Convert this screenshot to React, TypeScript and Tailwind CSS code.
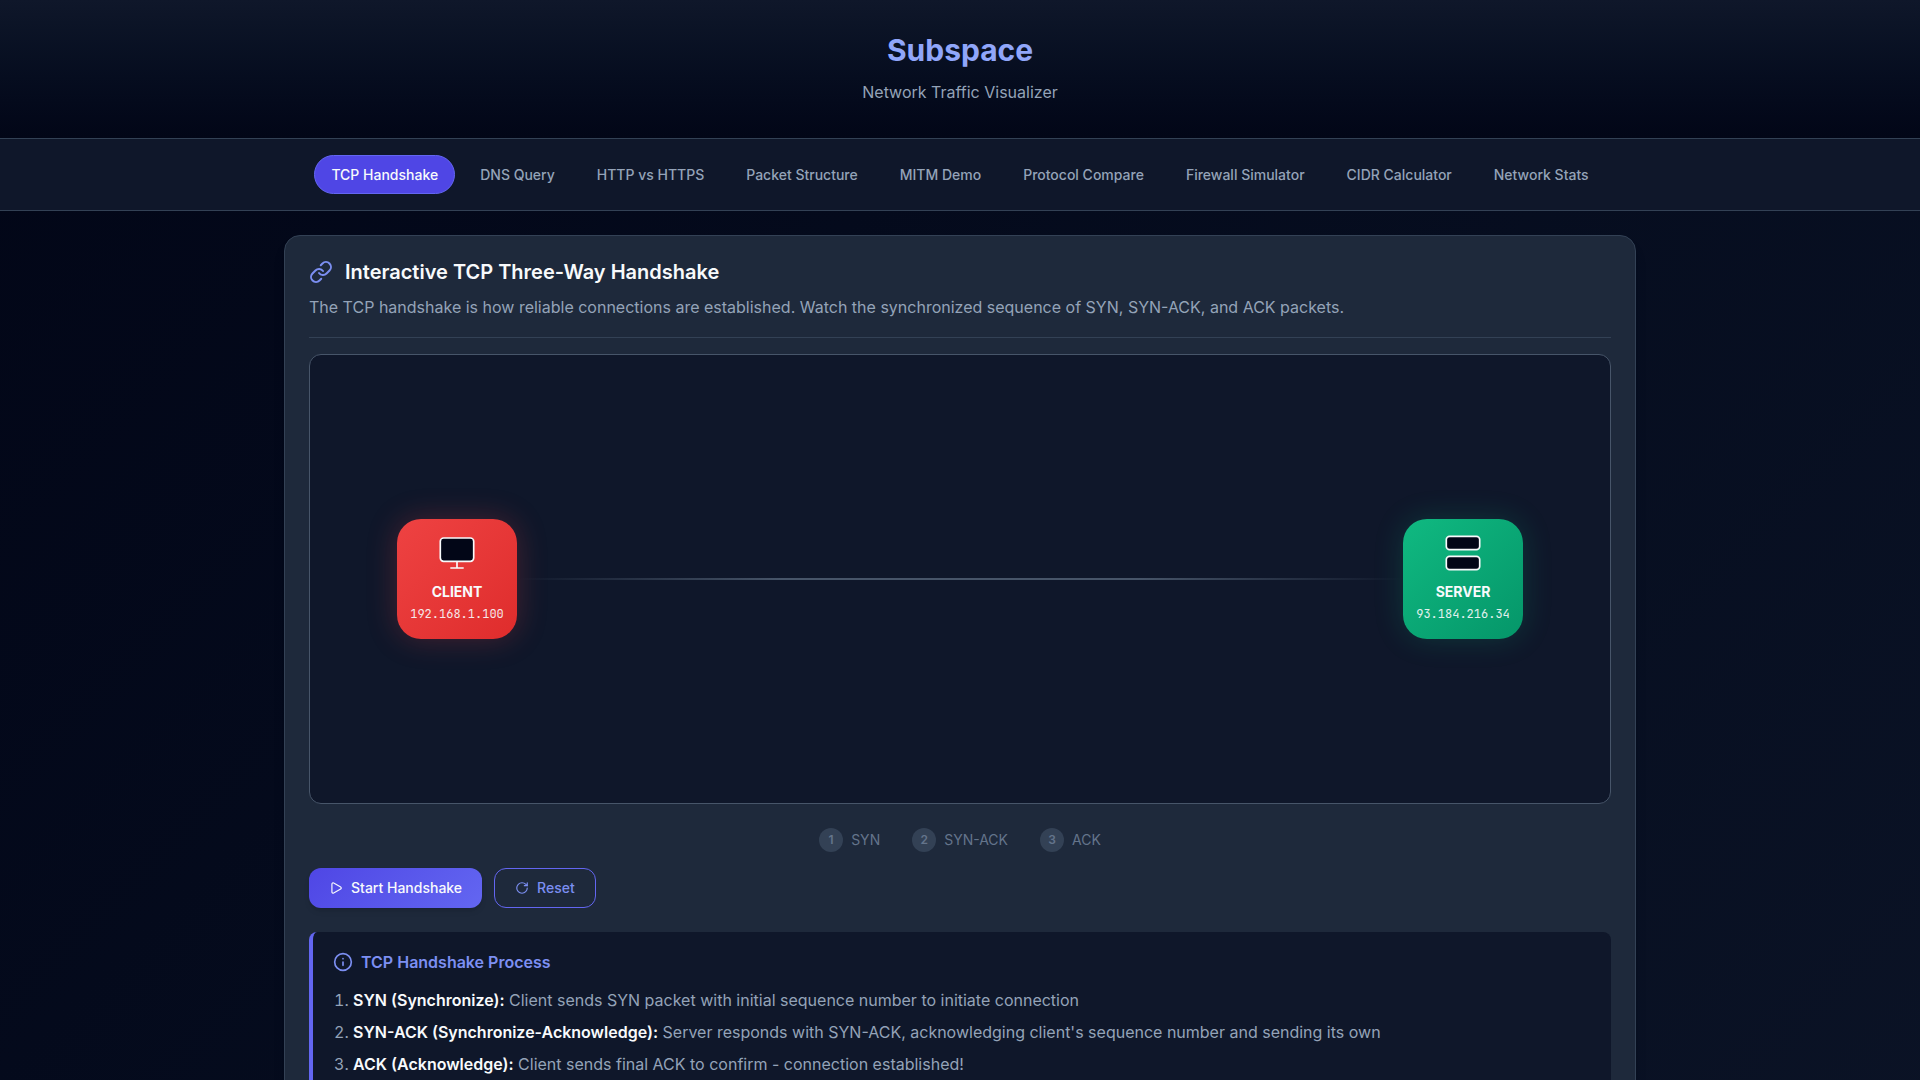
import { Info, Link, Play, RotateCw } from "lucide-react";
import { useState } from "react";

const tabs = [
  "TCP Handshake",
  "DNS Query",
  "HTTP vs HTTPS",
  "Packet Structure",
  "MITM Demo",
  "Protocol Compare",
  "Firewall Simulator",
  "CIDR Calculator",
  "Network Stats",
];

const steps = ["SYN", "SYN-ACK", "ACK"];

const processSteps = [
  {
    name: "SYN (Synchronize):",
    text: "Client sends SYN packet with initial sequence number to initiate connection",
  },
  {
    name: "SYN-ACK (Synchronize-Acknowledge):",
    text: "Server responds with SYN-ACK, acknowledging client's sequence number and sending its own",
  },
  {
    name: "ACK (Acknowledge):",
    text: "Client sends final ACK to confirm - connection established!",
  },
];

const ClientIcon = () => (
  <svg width="40" height="40" viewBox="0 0 40 40" fill="#020617" stroke="#f8fafc" strokeWidth="1.67">
    <rect x="3.3" y="5" width="33.4" height="23.3" rx="3.3" />
    <path d="M20 28.3V35M13.3 35h13.4" />
  </svg>
);

const ServerIcon = () => (
  <svg width="40" height="40" viewBox="0 0 40 40" fill="#020617" stroke="#f8fafc" strokeWidth="1.67">
    <rect x="3.3" y="3.3" width="33.4" height="13.4" rx="3.3" />
    <rect x="3.3" y="23.3" width="33.4" height="13.4" rx="3.3" />
  </svg>
);

const nodeClass =
  "flex size-[120px] shrink-0 flex-col items-center justify-center rounded-3xl";
const nodeLabelClass = "mt-2 text-sm leading-[21px] font-bold";
const nodeIpClass =
  "mt-0.5 font-['JetBrains_Mono','Liberation_Mono',monospace] text-xs leading-[21px] opacity-90";

const App = () => {
  const [activeTab, setActiveTab] = useState(tabs[0]);

  return (
    <div className="min-h-screen bg-linear-135 from-[#020617] to-[#0f172a] to-130% font-['Inter',sans-serif] text-base text-slate-50">
      <header className="border-b border-[#334155] bg-linear-to-b from-[#0f172a] to-[#020617] px-6 py-8 text-center">
        <h1 className="text-[30px] leading-9 font-bold text-[#90a6fa]">Subspace</h1>
        <p className="mt-2.5 leading-7 text-[#94a3b8]">Network Traffic Visualizer</p>
      </header>

      <nav className="flex flex-wrap justify-center gap-2 border-b border-[#334155] bg-[#0f172a] px-6 py-4">
        {tabs.map((tab) => (
          <button
            key={tab}
            onClick={() => setActiveTab(tab)}
            className={`rounded-full border px-4 py-2 text-sm leading-[21px] font-medium ${
              tab === activeTab
                ? "border-[#6366f1] bg-[#4f46e5] text-slate-50"
                : "border-transparent text-[#94a3b8]"
            }`}
          >
            {tab}
          </button>
        ))}
      </nav>

      <main className="mx-auto max-w-[1400px] p-6">
        <section className="rounded-2xl border border-[#334155] bg-[#1e293b] p-6 shadow-lg">
          <div className="mb-4 border-b border-[#334155] pb-4">
            <h2 className="mb-[9px] flex items-center gap-3 text-xl leading-6 font-semibold">
              <Link className="size-6 text-[#7c8ff2]" />
              Interactive TCP Three-Way Handshake
            </h2>
            <p className="leading-7 text-[#94a3b8]">
              The TCP handshake is how reliable connections are established. Watch the
              synchronized sequence of SYN, SYN-ACK, and ACK packets.
            </p>
          </div>

          <div className="flex h-[450px] items-center rounded-xl border border-[#475569] bg-[#0f172a] px-[87px]">
            <div className={`${nodeClass} bg-linear-135 from-[#ee4242] to-[#df2c2c] shadow-[0_0_30px_rgba(239,68,68,0.25)]`}>
              <ClientIcon />
              <span className={nodeLabelClass}>CLIENT</span>
              <span className={nodeIpClass}>192.168.1.100</span>
            </div>
            <div className="h-0.5 flex-1 bg-[linear-gradient(90deg,transparent,#475569_30%,#475569_70%,transparent)]" />
            <div className={`${nodeClass} bg-linear-135 from-[#10b981] to-[#059669] shadow-[0_0_30px_rgba(16,185,129,0.2)]`}>
              <ServerIcon />
              <span className={nodeLabelClass}>SERVER</span>
              <span className={nodeIpClass}>93.184.216.34</span>
            </div>
          </div>

          <div className="my-4 flex justify-center gap-8 pt-2">
            {steps.map((step, i) => (
              <div key={step} className="flex items-center gap-2 text-sm text-[#64748b]">
                <span className="flex size-6 items-center justify-center rounded-full bg-[#334155] text-xs font-semibold">
                  {i + 1}
                </span>
                {step}
              </div>
            ))}
          </div>

          <div className="flex flex-wrap gap-3">
            <button className="flex h-10 items-center gap-2 rounded-xl bg-linear-135 from-[#4f46e5] to-[#6366f1] px-5 text-sm font-medium shadow-md">
              <Play className="size-3.5" />
              Start Handshake
            </button>
            <button className="flex h-10 items-center gap-2 rounded-xl border border-[#6366f1] px-5 text-sm font-medium text-[#7c8ff2]">
              <RotateCw className="size-3.5" />
              Reset
            </button>
          </div>

          <div className="mt-6 rounded-lg border-l-4 border-[#6366f1] bg-[#0f172a] p-5">
            <h3 className="mb-3.5 flex items-center gap-2 leading-5 font-semibold text-[#7c8ff2]">
              <Info className="size-5" />
              TCP Handshake Process
            </h3>
            <ol className="list-decimal space-y-1 pl-5 leading-7 text-[#94a3b8]">
              {processSteps.map(({ name, text }) => (
                <li key={name}>
                  <strong className="font-semibold text-slate-50">{name}</strong> {text}
                </li>
              ))}
            </ol>
          </div>
        </section>
      </main>
    </div>
  );
};

export default App;
